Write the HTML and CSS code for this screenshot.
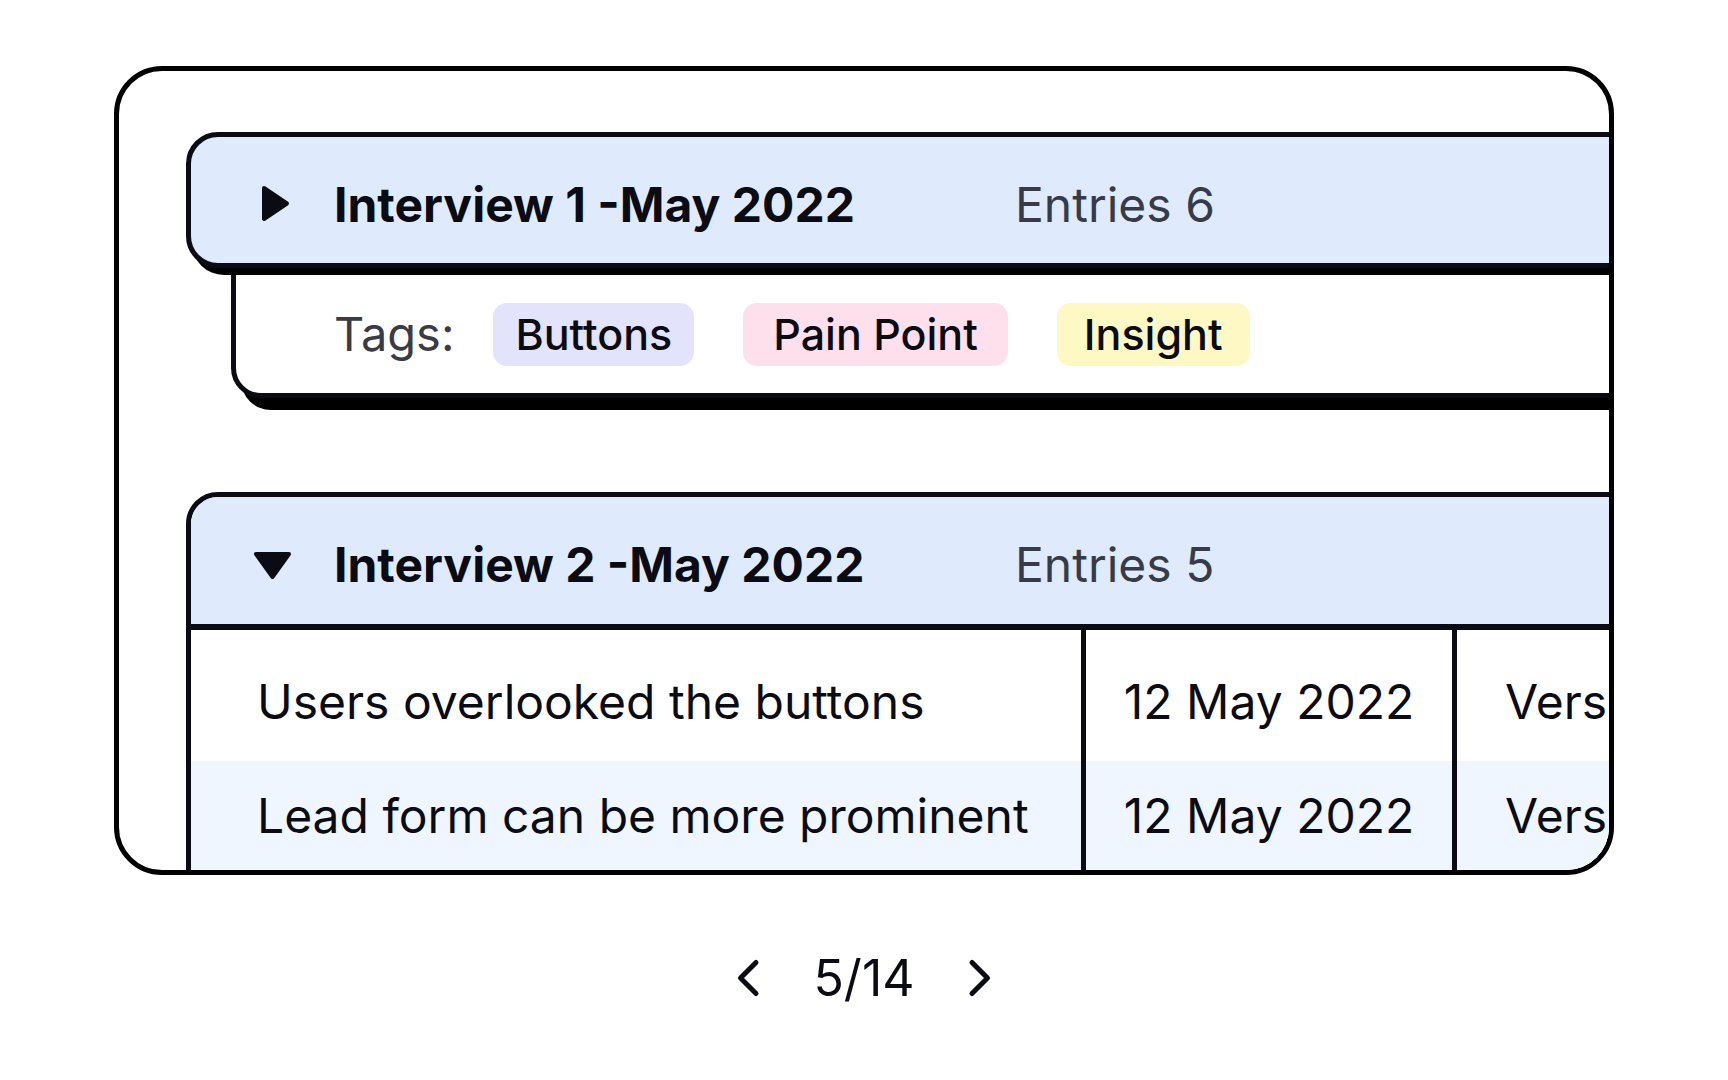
FILE: index.html
```html
<!DOCTYPE html>
<html lang="en">
<head>
<meta charset="utf-8">
<title>Interviews</title>
<link rel="stylesheet" href="styles.css">
</head>
<body>
<main class="stage">
  <section class="frame">
    <div class="group group-collapsed">
      <header class="group-head">
        <svg class="caret" viewBox="0 0 40 40" width="40" height="40" aria-hidden="true">
          <polygon points="11,3 34,18.5 11,34" fill="#0b0b14" stroke="#0b0b14" stroke-width="4" stroke-linejoin="round"/>
        </svg>
        <h2 class="group-title">Interview 1 -May 2022</h2>
        <span class="group-count">Entries 6</span>
      </header>
      <div class="tags-panel">
        <span class="tags-label">Tags:</span>
        <span class="tag tag-violet">Buttons</span>
        <span class="tag tag-pink">Pain Point</span>
        <span class="tag tag-yellow">Insight</span>
      </div>
    </div>

    <div class="group group-open">
      <header class="group-head">
        <svg class="caret" viewBox="0 0 40 40" width="40" height="40" aria-hidden="true">
          <polygon points="3,9 36,9 19.5,32" fill="#0b0b14" stroke="#0b0b14" stroke-width="4" stroke-linejoin="round"/>
        </svg>
        <h2 class="group-title">Interview 2 -May 2022</h2>
        <span class="group-count">Entries 5</span>
      </header>
      <div class="entries">
        <div class="entry entry-first">
          <div class="cell cell-note">Users overlooked the buttons</div>
          <div class="cell cell-date">12 May 2022</div>
          <div class="cell cell-version">Version 2</div>
        </div>
        <div class="entry entry-alt">
          <div class="cell cell-note">Lead form can be more prominent</div>
          <div class="cell cell-date">12 May 2022</div>
          <div class="cell cell-version">Version 2</div>
        </div>
      </div>
    </div>
  </section>

  <nav class="pager" aria-label="Pagination">
    <svg class="chev" viewBox="0 0 26 40" width="26" height="40" aria-hidden="true">
      <path d="M20 4.5 L4.5 20 L20 35.5" fill="none" stroke="#0b0b14" stroke-width="5" stroke-linecap="round" stroke-linejoin="round"/>
    </svg>
    <span class="pager-count">5/14</span>
    <svg class="chev" viewBox="0 0 26 40" width="26" height="40" aria-hidden="true">
      <path d="M6 4.5 L21.5 20 L6 35.5" fill="none" stroke="#0b0b14" stroke-width="5" stroke-linecap="round" stroke-linejoin="round"/>
    </svg>
  </nav>
</main>
</body>
</html>
```

FILE: styles.css
```css
* {
  box-sizing: border-box;
}

body {
  margin: 0;
  background: #ffffff;
  font-family: Inter, "Noto Sans", "Liberation Sans", sans-serif;
  color: #0b0b14;
}

.stage {
  display: flex;
  flex-direction: column;
  align-items: center;
}

.frame {
  width: 1500px;
  height: 809px;
  margin-top: 66px;
  border: 5px solid #000;
  border-radius: 48px;
  overflow: hidden;
  padding: 61px 0 0 67px;
  display: flex;
  flex-direction: column;
}

.group {
  width: 1500px;
  flex-shrink: 0;
}

.group-head {
  display: flex;
  align-items: center;
  background: #dfebfd;
  padding: 39px 0 29px 62px;
}

.caret {
  flex: 0 0 40px;
  display: block;
}

.group-title {
  margin: 0 0 0 41px;
  width: 681px;
  font-size: 48px;
  line-height: 58px;
  font-weight: 700;
  color: #0b0b14;
}

.group-count {
  font-size: 48px;
  line-height: 58px;
  font-weight: 400;
  color: #363b47;
}

/* collapsed group */
.group-collapsed .group-head {
  position: relative;
  z-index: 2;
  border: 5px solid #0b0b14;
  border-radius: 32px;
  box-shadow: 6px 7px 0 #000;
}

.tags-panel {
  position: relative;
  z-index: 1;
  margin-left: 45px;
  height: 130px;
  border: 5px solid #0b0b14;
  border-radius: 0 0 0 30px;
  box-shadow: 10px 12px 0 #000;
  background: #fff;
  display: flex;
  align-items: center;
  padding: 2px 0 0 98px;
}

.tags-label {
  font-size: 47px;
  line-height: 58px;
  color: #3a3b45;
  margin-right: 39px;
}

.tag {
  height: 63px;
  display: flex;
  align-items: center;
  padding: 0 22px;
  border-radius: 14px;
  font-size: 43px;
  font-weight: 500;
  color: #0b0b14;
  margin-right: 49px;
}

.tag-violet {
  background: #e3e3fc;
}

.tag-pink {
  background: #fde0ec;
  padding: 0 30px;
}

.tag-yellow {
  background: #fef8c4;
  padding: 0 27px;
}

/* open group */
.group-open {
  margin-top: 94px;
  border: 5px solid #0b0b14;
  border-radius: 32px 32px 0 0;
  overflow: hidden;
  background: #fff;
}

.group-open .group-head {
  padding: 39px 0 30px 62px;
  border-bottom: 6px solid #0b0b14;
}

.entry {
  display: grid;
  grid-template-columns: 890px 371px 1fr;
  font-size: 48px;
  line-height: 58px;
  color: #0b0b14;
}

.entry-first .cell {
  padding-top: 43px;
  padding-bottom: 30px;
}

.entry-alt {
  background: #eff6ff;
}

.entry-alt .cell {
  padding-top: 26px;
  padding-bottom: 47px;
}

.cell {
  white-space: nowrap;
  overflow: hidden;
}

.cell-note {
  padding-left: 66px;
}

.cell-date {
  border-left: 5px solid #0b0b14;
  text-align: center;
}

.cell-version {
  border-left: 5px solid #0b0b14;
  padding-left: 48px;
}

/* pager */
.pager {
  margin-top: 73px;
  display: flex;
  align-items: center;
  gap: 51px;
}

.chev {
  display: block;
}

.pager-count {
  font-size: 50px;
  line-height: 60px;
  color: #0b0b14;
}
```
